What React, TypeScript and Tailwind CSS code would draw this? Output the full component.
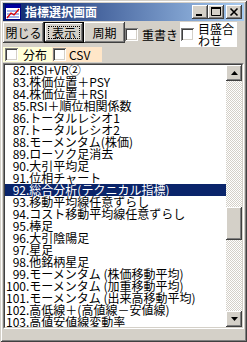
import React from 'react';

const items: [string, string][] = [
  ['82', 'RSI+VR②'],
  ['83', '株価位置＋PSY'],
  ['84', '株価位置＋RSI'],
  ['85', 'RSI＋順位相関係数'],
  ['86', 'トータルレシオ1'],
  ['87', 'トータルレシオ2'],
  ['88', 'モーメンタム(株価)'],
  ['89', 'ローソク足消去'],
  ['90', '大引平均足'],
  ['91', '位相チャート'],
  ['92', '総合分析(テクニカル指標)'],
  ['93', '移動平均線任意ずらし'],
  ['94', 'コスト移動平均線任意ずらし'],
  ['95', '棒足'],
  ['96', '大引陰陽足'],
  ['97', '星足'],
  ['98', '他銘柄星足'],
  ['99', 'モーメンタム (株価移動平均)'],
  ['100', 'モーメンタム (加重移動平均)'],
  ['101', 'モーメンタム (出来高移動平均)'],
  ['102', '高低線＋(高値線－安値線)'],
  ['103', '高値安値線変動率'],
];

const raised =
  'shadow-[inset_-1px_-1px_0_#404040,inset_1px_1px_0_#fff,inset_-2px_-2px_0_#808080,inset_2px_2px_0_#d4d0c8]';

const CheckBox = () => (
  <div className="w-[13px] h-[13px] shrink-0 bg-white shadow-[inset_1px_1px_0_#808080,inset_-1px_-1px_0_#fff,inset_2px_2px_0_#404040,inset_-2px_-2px_0_#d4d0c8]" />
);

const CaptionButton = ({ children }: { children: React.ReactNode }) => (
  <div className={`w-[16px] h-[14px] bg-[#d4d0c8] ${raised}`}>
    <svg width="16" height="14" viewBox="0 0 16 14">
      {children}
    </svg>
  </div>
);

const Arrow = ({ down }: { down?: boolean }) => (
  <div className={`w-[16px] h-[16px] bg-[#d4d0c8] ${raised} flex items-center justify-center`}>
    <svg width="7" height="4" viewBox="0 0 7 4">
      {down ? <path d="M0 0h7L3.5 4z" fill="#000" /> : <path d="M3.5 0L7 4H0z" fill="#000" />}
    </svg>
  </div>
);

const PushButton = ({ label, width, focused }: { label: string; width: string; focused?: boolean }) =>
  focused ? (
    <div className={`${width} h-[21px] border border-black`}>
      <div className={`w-full h-full ${raised} p-[3px]`}>
        <div className="w-full h-full border border-dotted border-black flex items-center justify-center">
          {label}
        </div>
      </div>
    </div>
  ) : (
    <div className={`${width} h-[21px] ${raised} flex items-center justify-center`}>{label}</div>
  );

export default function App() {
  return (
    <div className="w-[247px] h-[342px] overflow-hidden bg-[#d4d0c8] p-[3px] text-[12px] leading-[12px] text-black font-['Noto_Sans_CJK_JP','Noto_Sans',sans-serif] shadow-[inset_1px_1px_0_#d4d0c8,inset_-1px_-1px_0_#404040,inset_2px_2px_0_#fff,inset_-2px_-2px_0_#808080]">
      {/* title bar */}
      <div className="h-[18px] flex items-center bg-[linear-gradient(to_right,#0a246a,#a6caf0)] pl-[2px] pr-[2px]">
        <svg width="16" height="16" viewBox="0 0 16 16" className="shrink-0">
          <rect x="0.5" y="0.5" width="15" height="15" fill="#fff" stroke="#000080" />
          <rect x="1" y="1" width="14" height="3" fill="#0000a0" />
          <path d="M2 7h12M2 10h12M2 13h12" stroke="#4060d0" />
          <path d="M2 14L6 9L9 11L14 5" stroke="#e00000" strokeWidth="1.3" fill="none" />
        </svg>
        <span className="ml-[4px] text-white font-bold">指標選択画面</span>
        <div className="ml-auto flex">
          <CaptionButton>
            <rect x="4" y="9" width="6" height="2" fill="#000" />
          </CaptionButton>
          <CaptionButton>
            <path d="M3.5 2.5h9v8h-9z" stroke="#000" fill="none" />
            <rect x="3" y="2" width="10" height="2" fill="#000" />
          </CaptionButton>
          <div className="ml-[2px]">
            <CaptionButton>
              <path d="M4.5 3.5L11.5 10.5M11.5 3.5L4.5 10.5" stroke="#000" strokeWidth="1.6" />
            </CaptionButton>
          </div>
        </div>
      </div>

      {/* button row */}
      <div className="mt-[1px] h-[25px] flex items-start">
        <PushButton label="閉じる" width="w-[41px]" />
        <PushButton label="表示" width="w-[40px]" focused />
        <PushButton label="周期" width="w-[41px]" />
        <div className="mt-[6px]">
          <CheckBox />
        </div>
        <span className="ml-[4px] mt-[6px] leading-[13px]">重書き</span>
        <div className="ml-[2px] w-[57px] h-[25px] bg-white flex items-center pl-[1px]">
          <CheckBox />
          <div className="ml-[4px] leading-[12px]">
            目盛合
            <br />
            わせ
          </div>
        </div>
      </div>

      {/* second row */}
      <div className="h-[15px] flex">
        <div className="w-[49px] h-full bg-[#ffffd8] flex items-center pl-[2px]">
          <CheckBox />
          <span className="ml-[5px]">分布</span>
        </div>
        <div className="w-[50px] h-full bg-[#ffe6c8] flex items-center pl-[1px]">
          <CheckBox />
          <span className="ml-[3px]">CSV</span>
        </div>
      </div>

      {/* list box */}
      <div className="mt-[1px] h-[266px] border border-t-[#808080] border-l-[#808080] border-b-white border-r-white">
        <div className="h-full border border-t-[#404040] border-l-[#404040] border-b-[#d4d0c8] border-r-[#d4d0c8] bg-white flex">
          <div className="flex-1 overflow-hidden">
            <div className="-mt-[1px]">
              {items.map(([n, t]) => (
                <div
                  key={n}
                  className={`h-[12px] whitespace-nowrap pl-[1px] ${n === '92' ? 'bg-[#0a246a] text-white' : ''}`}
                >
                  <span className="inline-block w-[20px] text-right">{n}</span>.{t}
                </div>
              ))}
            </div>
          </div>
          <div className="w-[16px] flex flex-col">
            <Arrow />
            <div className="flex-1 bg-[repeating-conic-gradient(#d4d0c8_0_25%,#fff_0_50%)] bg-[length:2px_2px]">
              <div className={`mt-[126px] h-[33px] bg-[#d4d0c8] ${raised}`} />
            </div>
            <Arrow down />
          </div>
        </div>
      </div>
    </div>
  );
}
